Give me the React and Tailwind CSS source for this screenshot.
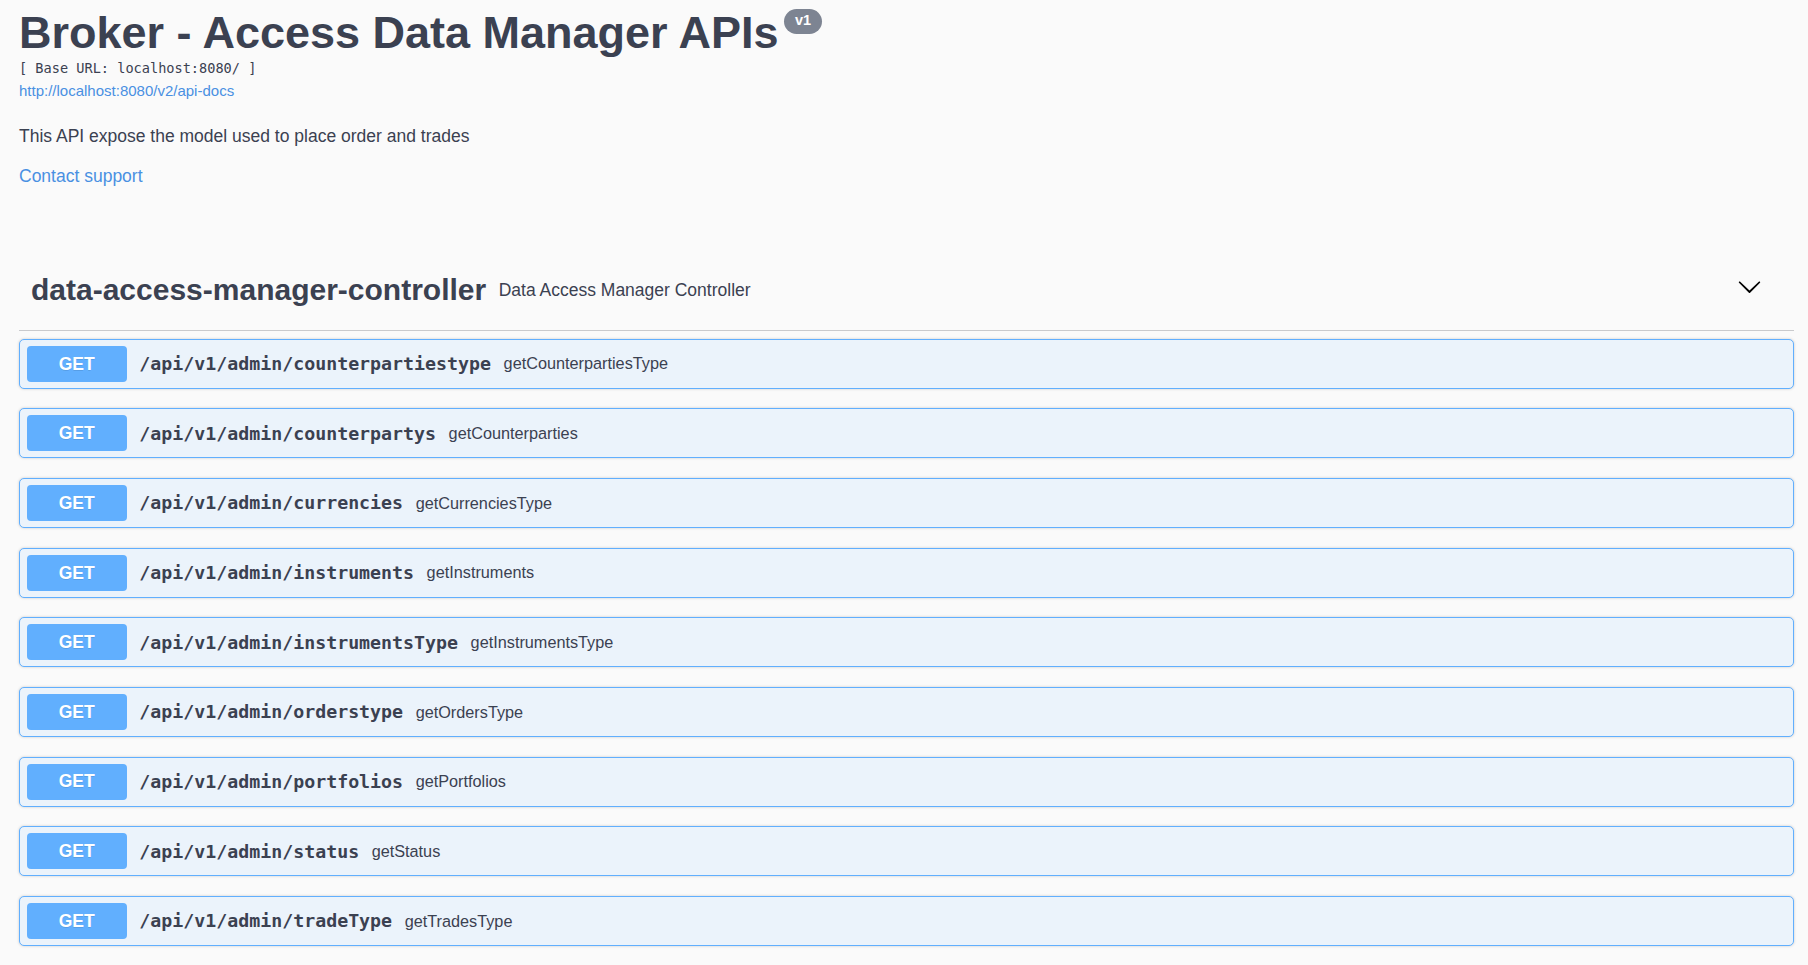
import React from "react";

const ops = [
  ["/api/v1/admin/counterpartiestype", "getCounterpartiesType"],
  ["/api/v1/admin/counterpartys", "getCounterparties"],
  ["/api/v1/admin/currencies", "getCurrenciesType"],
  ["/api/v1/admin/instruments", "getInstruments"],
  ["/api/v1/admin/instrumentsType", "getInstrumentsType"],
  ["/api/v1/admin/orderstype", "getOrdersType"],
  ["/api/v1/admin/portfolios", "getPortfolios"],
  ["/api/v1/admin/status", "getStatus"],
  ["/api/v1/admin/tradeType", "getTradesType"],
];

function Op({ path, desc }) {
  return (
    <div className="h-[50px] rounded-[5px] border border-[#61affe] bg-[#ebf3fb] shadow-[0_0_3px_rgba(0,0,0,0.19)] flex items-center pl-[6.7px]">
      <div className="w-[100px] h-[36px] rounded-[4px] bg-[#61affe] text-white font-bold text-[17.5px] flex items-center justify-center [text-shadow:0_1px_0_rgba(0,0,0,0.1)]">
        GET
      </div>
      <span className="px-[12.5px] font-['DejaVu_Sans_Mono',monospace] font-bold text-[18.27px] text-[#3b4151]">
        {path}
      </span>
      <span className="text-[16.25px] text-[#3b4151]">{desc}</span>
    </div>
  );
}

export default function App() {
  return (
    <div className="min-h-screen bg-[#fafafa] font-['Liberation_Sans',Arial,sans-serif] text-[#3b4151]">
      <div className="pl-[19px] pr-[14px] pt-[7px]">
        <div className="flex items-start">
          <h2 className="text-[45px] leading-[52px] font-bold text-[#3b4151]">
            Broker - Access Data Manager APIs
          </h2>
          <span className="ml-[5.5px] mt-[1.8px] w-[38px] h-[25px] rounded-full bg-[#7d8492] text-white font-bold text-[14.5px] flex items-center justify-center">
            v1
          </span>
        </div>
        <pre className="mt-[1px] font-['DejaVu_Sans_Mono',monospace] text-[13.6px] leading-[17px] text-[#3b4151]">
          [ Base URL: localhost:8080/ ]
        </pre>
        <a className="block mt-[4.5px] text-[15px] leading-[18px] text-[#4990e2]">
          http://localhost:8080/v2/api-docs
        </a>
        <p className="mt-[26.6px] text-[17.5px] leading-[21px] text-[#3b4151]">
          This API expose the model used to place order and trades
        </p>
        <a className="block mt-[19px] text-[17.5px] leading-[21px] text-[#4990e2]">
          Contact support
        </a>

        <div className="mt-[61.4px] h-[83px] flex items-center border-b border-[#c9cacd] pl-[12px] pr-[32px] pt-[2px]">
          <span className="text-[30px] leading-[36px] font-bold text-[#3b4151]">
            data-access-manager-controller
          </span>
          <span className="ml-[12.5px] text-[17.5px] text-[#3b4151]">
            Data Access Manager Controller
          </span>
          <div className="flex-1" />
          <svg width="25" height="25" viewBox="0 0 20 20" className="mb-[7px]">
            <path
              fill="#000"
              d="M17.418 6.109c.272-.268.709-.268.979 0s.271.701 0 .969l-7.908 7.83c-.27.268-.707.268-.979 0l-7.908-7.83c-.27-.268-.27-.701 0-.969.271-.268.709-.268.979 0L10 13.25l7.418-7.141z"
            />
          </svg>
        </div>

        <div className="mt-[7.2px] flex flex-col gap-[19.66px]">
          {ops.map(([p, d]) => (
            <Op key={p} path={p} desc={d} />
          ))}
        </div>
      </div>
    </div>
  );
}
